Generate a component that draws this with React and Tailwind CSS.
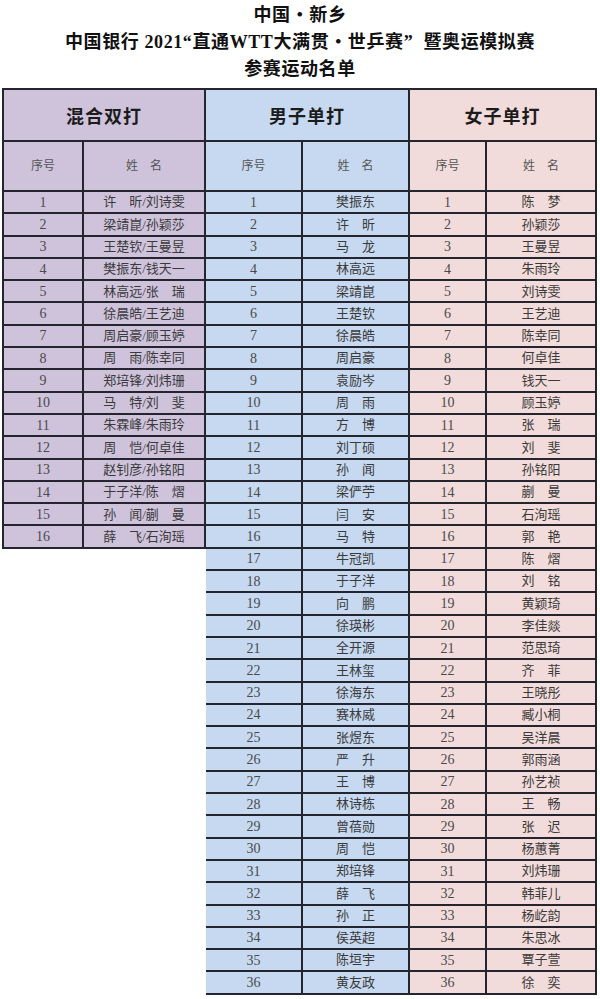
import React from "react";

const mixed = [
  "许　昕/刘诗雯", "梁靖崑/孙颖莎", "王楚钦/王曼昱", "樊振东/钱天一",
  "林高远/张　瑞", "徐晨皓/王艺迪", "周启豪/顾玉婷", "周　雨/陈幸同",
  "郑培锋/刘炜珊", "马　特/刘　斐", "朱霖峰/朱雨玲", "周　恺/何卓佳",
  "赵钊彦/孙铭阳", "于子洋/陈　熠", "孙　闻/蒯　曼", "薛　飞/石洵瑶",
];

const men = [
  "樊振东", "许　昕", "马　龙", "林高远", "梁靖崑", "王楚钦", "徐晨皓", "周启豪",
  "袁励岑", "周　雨", "方　博", "刘丁硕", "孙　闻", "梁俨苧", "闫　安", "马　特",
  "牛冠凯", "于子洋", "向　鹏", "徐瑛彬", "全开源", "王林玺", "徐海东", "赛林威",
  "张煜东", "严　升", "王　博", "林诗栋", "曾蓓勋", "周　恺", "郑培锋", "薛　飞",
  "孙　正", "侯英超", "陈垣宇", "黄友政",
];

const women = [
  "陈　梦", "孙颖莎", "王曼昱", "朱雨玲", "刘诗雯", "王艺迪", "陈幸同", "何卓佳",
  "钱天一", "顾玉婷", "张　瑞", "刘　斐", "孙铭阳", "蒯　曼", "石洵瑶", "郭　艳",
  "陈　熠", "刘　铭", "黄颖琦", "李佳燚", "范思琦", "齐　菲", "王晓彤", "臧小桐",
  "吴洋晨", "郭雨涵", "孙艺祯", "王　畅", "张　迟", "杨蕙菁", "刘炜珊", "韩菲儿",
  "杨屹韵", "朱思冰", "覃子萱", "徐　奕",
];

const Block = ({ title, names, bg, numW, nameW, first }) => (
  <div className={`flex flex-col ${bg} ${first ? "border-l-2 border-[#25252f]" : ""}`}>
    <div className="h-[52px] flex items-center justify-center border-r-2 border-b-2 border-[#25252f] text-[18px] font-bold text-[#1c1c1c] font-['Noto_Sans_CJK_SC',sans-serif] tracking-[1px]">
      {title}
    </div>
    <div className="flex h-[50px] text-[12px] text-[#555]">
      <div className={`${numW} flex items-center justify-center border-r-2 border-b-2 border-[#25252f]`}>
        序号
      </div>
      <div className={`${nameW} flex items-center justify-center border-r-2 border-b-2 border-[#25252f]`}>
        姓　名
      </div>
    </div>
    {names.map((n, i) => (
      <div key={i} className="flex h-[22.3px]">
        <div className={`${numW} flex items-center justify-center border-r-2 border-b-2 border-[#25252f] text-[14px] text-[#4a4a4a]`}>
          {i + 1}
        </div>
        <div className={`${nameW} flex items-center justify-center border-r-2 border-b-2 border-[#25252f] text-[13px] text-[#3a3a3a]`}>
          {n}
        </div>
      </div>
    ))}
  </div>
);

export default function App() {
  return (
    <div className="w-[600px] h-[999px] bg-white overflow-hidden font-['Liberation_Serif','Noto_Sans_CJK_SC',serif]">
      <div className="pt-[2px] text-center text-[18px] font-bold leading-[27px] text-[#111] tracking-[0.6px]">
        <div>中国・新乡</div>
        <div>中国银行 2021“直通WTT大满贯・世乒赛” &nbsp;暨奥运模拟赛</div>
        <div>参赛运动名单</div>
      </div>
      <div className="mt-[5px] ml-[2px] flex items-start border-t-2 border-[#25252f] w-[595px]">
        <Block title="混合双打" names={mixed} bg="bg-[#cfc3dc]" numW="w-[80px]" nameW="w-[122px]" first />
        <Block title="男子单打" names={men} bg="bg-[#c6d9f0]" numW="w-[97px]" nameW="w-[107px]" />
        <Block title="女子单打" names={women} bg="bg-[#f2dcdb]" numW="w-[77px]" nameW="w-[110px]" />
      </div>
    </div>
  );
}
